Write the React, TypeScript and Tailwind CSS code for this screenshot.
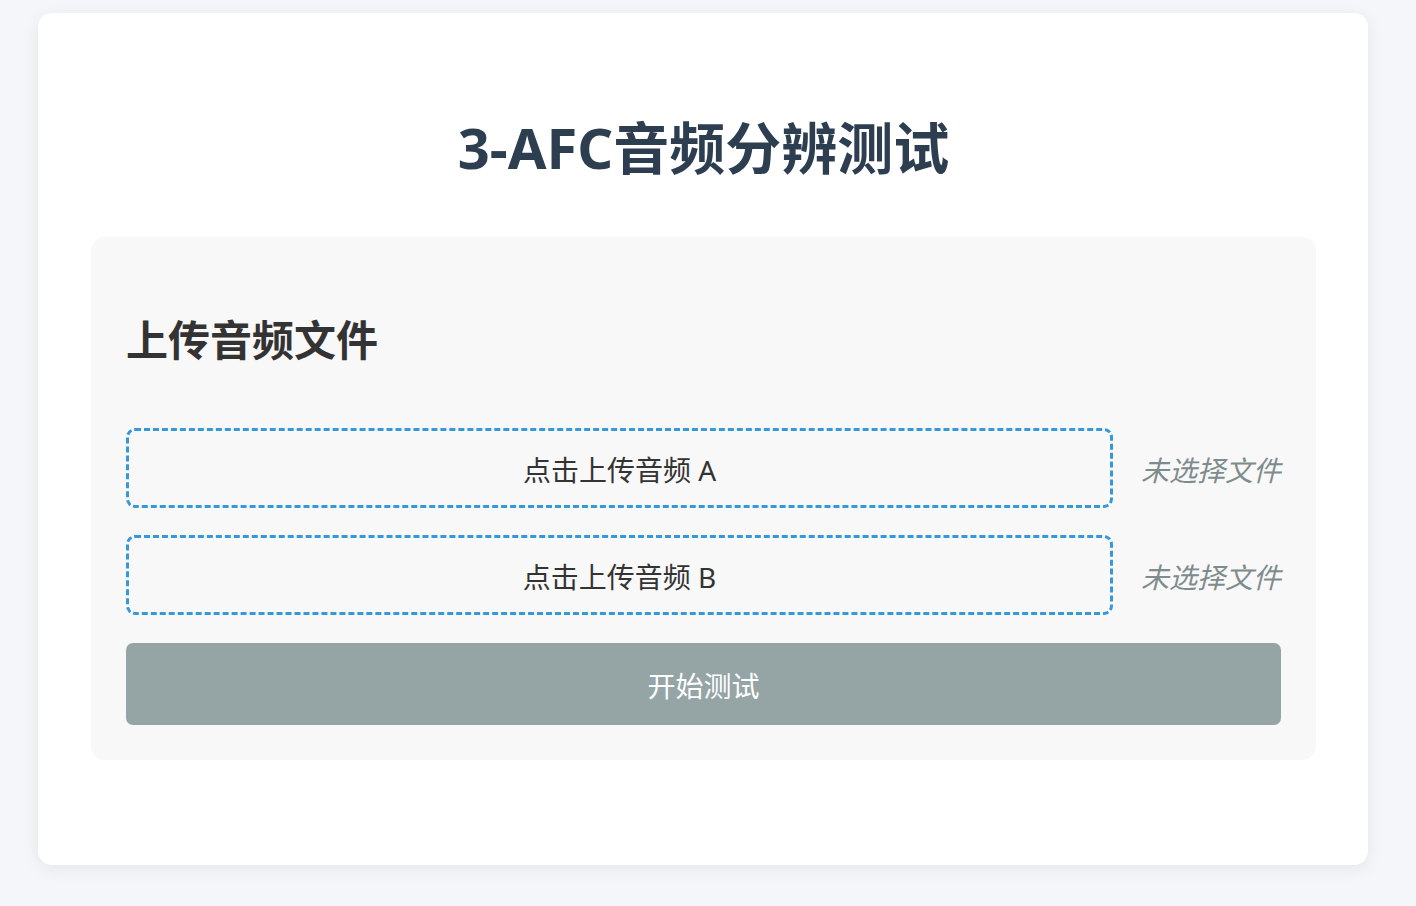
import React from "react";

const font = { fontFamily: '"Noto Sans", "Noto Sans CJK SC", sans-serif' };

function UploadRow({ label }: { label: string }) {
  return (
    <div className="flex items-center gap-[28px]">
      <div className="flex-1 h-[80px] border-[3px] border-dashed border-[#3498db] rounded-[9px] flex items-center justify-center pt-[3px] text-[28px] text-[#333333]">
        {label}
      </div>
      <div className="w-[140px] pt-[3px] text-[28px] italic text-[#7f8c8d] leading-none whitespace-nowrap">
        未选择文件
      </div>
    </div>
  );
}

export default function App() {
  return (
    <div className="min-h-[906px] w-[1416px] bg-[#f5f6fa] pt-[13px]" style={font}>
      <div className="ml-[38px] w-[1330px] h-[852px] bg-white rounded-[14px] shadow-[0_4px_18px_rgba(0,0,0,0.07)] pt-[94px] pl-[53px] pr-[52px]">
        <h1 className="h-[80px] leading-[80px] text-center text-[56px] font-bold text-[#2c3e50]">
          3-AFC音频分辨测试
        </h1>
        <div className="mt-[50px] bg-[#f8f8f8] rounded-[14px] pt-[73px] pb-[35px] px-[35px]">
          <h2 className="h-[60px] leading-[60px] text-[42px] font-bold text-[#333333]">
            上传音频文件
          </h2>
          <div className="mt-[58px] flex flex-col gap-[27px]">
            <UploadRow label="点击上传音频 A" />
            <UploadRow label="点击上传音频 B" />
            <button className="mt-[1px] h-[82px] w-full rounded-[7px] bg-[#95a5a6] pt-[3px] text-white text-[28px]">
              开始测试
            </button>
          </div>
        </div>
      </div>
    </div>
  );
}
